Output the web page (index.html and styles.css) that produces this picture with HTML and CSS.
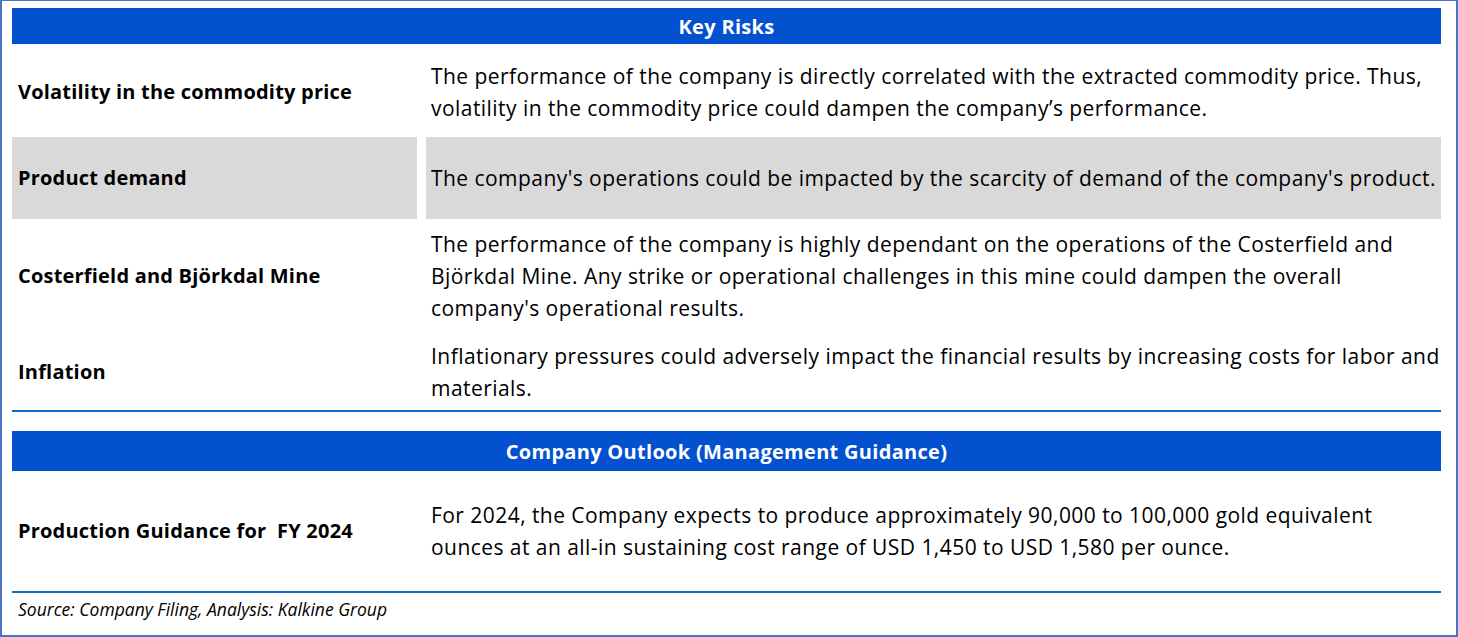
FILE: index.html
```html
<!DOCTYPE html>
<html>
<head>
<meta charset="utf-8">
<link rel="stylesheet" href="styles.css">
</head>
<body>
<div class="frame">
  <div class="table">
    <div class="head">Key Risks</div>
    <div class="row r1">
      <div class="label">Volatility in the commodity price</div>
      <div class="text">The performance of the company is directly correlated with the extracted commodity price. Thus,<br>volatility in the commodity price could dampen the company’s performance.</div>
    </div>
    <div class="row r2 shaded">
      <div class="label">Product demand</div>
      <div class="text">The company's operations could be impacted by the scarcity of demand of the company's product.</div>
    </div>
    <div class="row r3">
      <div class="label">Costerfield and Björkdal Mine</div>
      <div class="text">The performance of the company is highly dependant on the operations of the Costerfield and<br>Björkdal Mine. Any strike or operational challenges in this mine could dampen the overall<br>company's operational results.</div>
    </div>
    <div class="row r4">
      <div class="label">Inflation</div>
      <div class="text">Inflationary pressures could adversely impact the financial results by increasing costs for labor and<br>materials.</div>
    </div>
    <div class="rule"></div>
    <div class="head head2">Company Outlook (Management Guidance)</div>
    <div class="row r5">
      <div class="label">Production Guidance for&nbsp; FY 2024</div>
      <div class="text">For 2024, the Company expects to produce approximately 90,000 to 100,000 gold equivalent<br>ounces at an all-in sustaining cost range of USD 1,450 to USD 1,580 per ounce.</div>
    </div>
    <div class="rule rule2"></div>
    <div class="source">Source: Company Filing, Analysis: Kalkine Group</div>
  </div>
</div>
</body>
</html>
```
FILE: styles.css
```css
html, body {
  margin: 0;
  padding: 0;
  background: #ffffff;
}
.frame {
  box-sizing: border-box;
  width: 1458px;
  height: 637px;
  border: 2px solid #4a74c8;
  border-top-width: 1px;
  background: #ffffff;
  padding: 7px 15px 0 10px;
  font-family: "Open Sans", "Noto Sans", sans-serif;
  color: #000000;
}
.table {
  width: 1429px;
}
.head {
  height: 36px;
  background: #0451cf;
  color: #ffffff;
  font-weight: 700;
  font-size: 20px;
  letter-spacing: 0.3px;
  display: flex;
  align-items: center;
  justify-content: center;
}
.head2 {
  height: 40px;
}
.row {
  display: grid;
  grid-template-columns: 405px 1015px;
  column-gap: 9px;
  margin-top: 4px;
}
.label, .text {
  display: flex;
  align-items: center;
  line-height: 32px;
  white-space: nowrap;
}
.label {
  padding-left: 6px;
  font-weight: 700;
  font-size: 20px;
  letter-spacing: 0.2px;
}
.text {
  padding-left: 5px;
  font-size: 21px;
  letter-spacing: 0.45px;
}
.r1 { height: 88px; margin-top: 4px; }
.r2 { height: 82px; margin-top: 1px; }
.r3 { height: 106px; }
.r4 { height: 77px; }
.r5 { height: 120px; margin-top: 0; }
.shaded .label, .shaded .text {
  background: #d9d9d9;
}
.rule {
  height: 2px;
  background: #0a6fc2;
  margin-bottom: 19px;
}
.rule2 {
  margin-bottom: 0;
}
.source {
  font-style: italic;
  font-size: 17.5px;
  padding-left: 6px;
  line-height: 32px;
}
```
